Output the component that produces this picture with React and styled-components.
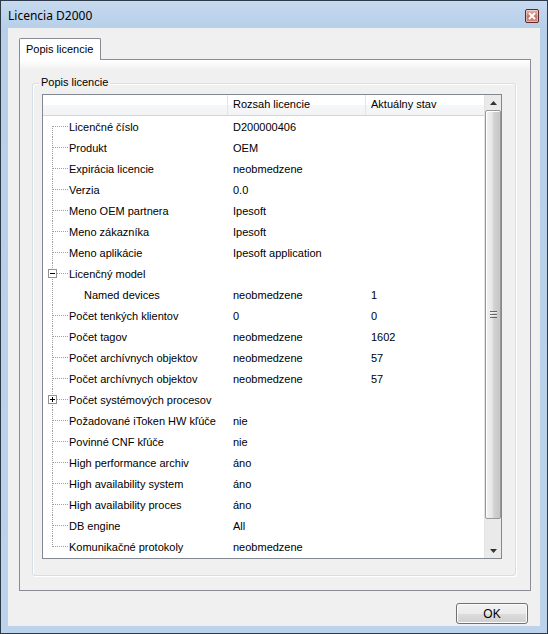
import React from "react";
import styled, { createGlobalStyle } from "styled-components";

const GlobalStyle = createGlobalStyle`
  body {
    margin: 0;
    font-family: Tahoma, "Liberation Sans", Arial, sans-serif;
    font-size: 11px;
    color: #000;
  }
  * { box-sizing: border-box; }
`;

const rows = [
  { name: "Licenčné číslo", range: "D200000406", state: "" },
  { name: "Produkt", range: "OEM", state: "" },
  { name: "Expirácia licencie", range: "neobmedzene", state: "" },
  { name: "Verzia", range: "0.0", state: "" },
  { name: "Meno OEM partnera", range: "Ipesoft", state: "" },
  { name: "Meno zákazníka", range: "Ipesoft", state: "" },
  { name: "Meno aplikácie", range: "Ipesoft application", state: "" },
  { name: "Licenčný model", range: "", state: "", toggle: "minus" },
  { name: "Named devices", range: "neobmedzene", state: "1", child: true },
  { name: "Počet tenkých klientov", range: "0", state: "0" },
  { name: "Počet tagov", range: "neobmedzene", state: "1602" },
  { name: "Počet archívnych objektov", range: "neobmedzene", state: "57" },
  { name: "Počet archívnych objektov", range: "neobmedzene", state: "57" },
  { name: "Počet systémových procesov", range: "", state: "", toggle: "plus" },
  { name: "Požadované iToken HW kľúče", range: "nie", state: "" },
  { name: "Povinné CNF kľúče", range: "nie", state: "" },
  { name: "High performance archiv", range: "áno", state: "" },
  { name: "High availability system", range: "áno", state: "" },
  { name: "High availability proces", range: "áno", state: "" },
  { name: "DB engine", range: "All", state: "" },
  { name: "Komunikačné protokoly", range: "neobmedzene", state: "" },
];

const App = () => {
  return (
    <>
      <GlobalStyle />
      <Window>
        <TitleBar>
          <Title>Licencia D2000</Title>
          <CloseButton>
            <svg width="8" height="8" viewBox="0 0 8 8">
              <path d="M1 1 L7 7 M7 1 L1 7" stroke="#fff" strokeWidth="2" />
            </svg>
          </CloseButton>
        </TitleBar>
        <Client>
          <TabStrip>
            <Tab>Popis licencie</Tab>
          </TabStrip>
          <TabPanel>
            <GroupBox>
              <Legend>Popis licencie</Legend>
              <ListView>
                <ListBody>
                  <HeaderRow>
                    <HeaderCell />
                    <HeaderCell>Rozsah licencie</HeaderCell>
                    <HeaderCell>Aktuálny stav</HeaderCell>
                  </HeaderRow>
                  {rows.map((r, i) => (
                    <Row key={i}>
                      <TreeCell>
                        <VLine
                          $first={i === 0}
                          $last={i === rows.length - 1}
                        />
                        {!r.child && <HLine $box={!!r.toggle} />}
                        {r.toggle && (
                          <Toggle>
                            <svg width="9" height="9" viewBox="0 0 9 9">
                              <path d="M2 4.5 H7" stroke="#000" strokeWidth="1" />
                              {r.toggle === "plus" && (
                                <path d="M4.5 2 V7" stroke="#000" strokeWidth="1" />
                              )}
                            </svg>
                          </Toggle>
                        )}
                        <Label $child={r.child}>{r.name}</Label>
                      </TreeCell>
                      <Cell>{r.range}</Cell>
                      <Cell>{r.state}</Cell>
                    </Row>
                  ))}
                </ListBody>
                <ScrollBar>
                  <ScrollButton>
                    <svg width="7" height="4" viewBox="0 0 7 4">
                      <path d="M0 4 L3.5 0 L7 4 Z" fill="#333" />
                    </svg>
                  </ScrollButton>
                  <Track>
                    <Thumb>
                      <Grip />
                    </Thumb>
                  </Track>
                  <ScrollButton>
                    <svg width="7" height="4" viewBox="0 0 7 4">
                      <path d="M0 0 L3.5 4 L7 0 Z" fill="#333" />
                    </svg>
                  </ScrollButton>
                </ScrollBar>
              </ListView>
            </GroupBox>
          </TabPanel>
          <ButtonRow>
            <Button>OK</Button>
          </ButtonRow>
        </Client>
      </Window>
    </>
  );
};

export default App;

const Window = styled.div`
  width: 548px;
  height: 634px;
  border: 1px solid #2c3a4a;
  background: linear-gradient(#c6d9ef 0, #b7cfe9 28px, #bcd3eb 100%);
  display: flex;
  flex-direction: column;
  padding: 0 7px 7px 7px;
`;

const TitleBar = styled.div`
  height: 28px;
  display: flex;
  align-items: center;
  justify-content: space-between;
  padding: 2px 1px 0 0;
`;

const Title = styled.div`
  font-family: "Noto Sans", "Open Sans", sans-serif;
  font-size: 12px;
  color: #000;
`;

const CloseButton = styled.div`
  width: 14px;
  height: 14px;
  border: 1px solid #5d2a2a;
  border-radius: 2px;
  background: linear-gradient(#e8b3a8, #c8726a 55%, #d08c80);
  display: flex;
  align-items: center;
  justify-content: center;
  box-shadow: inset 0 0 0 1px rgba(255, 255, 255, 0.4);
`;

const Client = styled.div`
  flex: 1;
  background: #f0f0f0;
  display: flex;
  flex-direction: column;
  padding: 8px 9px 2px 11px;
`;

const TabStrip = styled.div`
  height: 23px;
  display: flex;
  align-items: flex-end;
`;

const Tab = styled.div`
  height: 22px;
  padding: 4px 7px 0 6px;
  white-space: nowrap;
  border: 1px solid #898c95;
  border-bottom: none;
  border-radius: 2px 2px 0 0;
  background: #fff;
  margin-bottom: -1px;
  position: relative;
  z-index: 1;
`;

const TabPanel = styled.div`
  height: 532px;
  border: 1px solid #898c95;
  background: linear-gradient(#fff 0, #f0f0f0 10px);
  padding: 23px 14px 14px 12px;
  display: flex;
`;

const GroupBox = styled.div`
  flex: 1;
  position: relative;
  border: 1px solid #d5dfe5;
  border-radius: 3px;
  padding: 10px 13px 16px 9px;
  display: flex;
  box-shadow: inset 1px 1px 0 #fff, 1px 1px 0 #fff;
`;

const Legend = styled.div`
  position: absolute;
  top: -8px;
  left: 6px;
  padding: 0 2px;
  background: #f0f0f0;
`;

const ListView = styled.div`
  flex: 1;
  border: 1px solid #828790;
  background: #fff;
  display: flex;
`;

const ListBody = styled.div`
  flex: 1;
  display: flex;
  flex-direction: column;
`;

const columns = "185px 138px 1fr";

const HeaderRow = styled.div`
  display: grid;
  grid-template-columns: ${columns};
  height: 21px;
  background: linear-gradient(#fff 0, #fff 50%, #f6f7f9 51%, #f2f3f5 100%);
  border-bottom: 1px solid #d5d5d5;
`;

const HeaderCell = styled.div`
  display: flex;
  align-items: center;
  padding: 0 0 2px 5px;
  border-right: 1px solid #e3e4e6;
  &:last-child {
    border-right: none;
    padding-left: 5px;
  }
`;

const Row = styled.div`
  display: grid;
  grid-template-columns: ${columns};
  height: 21px;
  align-items: center;
`;

const TreeCell = styled.div`
  position: relative;
  height: 100%;
  display: flex;
  align-items: center;
`;

const VLine = styled.div`
  position: absolute;
  left: 9px;
  top: ${(p) => (p.$first ? "10px" : "0")};
  height: ${(p) => (p.$first ? "11px" : p.$last ? "11px" : "21px")};
  border-left: 1px dotted #a0a0a0;
`;

const HLine = styled.div`
  position: absolute;
  left: ${(p) => (p.$box ? "14px" : "10px")};
  top: 10px;
  width: ${(p) => (p.$box ? "11px" : "15px")};
  border-top: 1px dotted #a0a0a0;
`;

const Toggle = styled.div`
  position: absolute;
  left: 5px;
  top: 6px;
  width: 9px;
  height: 9px;
  border: 1px solid #919191;
  background: #fff;
  display: flex;
  align-items: center;
  justify-content: center;
  & svg {
    margin: -1px;
  }
`;

const Label = styled.div`
  padding-left: ${(p) => (p.$child ? "41px" : "26px")};
  white-space: nowrap;
`;

const Cell = styled.div`
  padding-left: 5px;
  white-space: nowrap;
`;

const ScrollBar = styled.div`
  width: 17px;
  display: flex;
  flex-direction: column;
  background: #eaeaea;
  border-left: 1px solid #e3e3e3;
`;

const ScrollButton = styled.div`
  height: 15px;
  display: flex;
  align-items: center;
  justify-content: center;
`;

const Track = styled.div`
  flex: 1;
  display: flex;
  flex-direction: column;
  padding-bottom: 24px;
`;

const Thumb = styled.div`
  flex: 1;
  border: 1px solid #979797;
  border-radius: 2px;
  background: linear-gradient(90deg, #f2f2f2 0, #e6e6e6 45%, #d2d2d2 55%, #c6c6c6 100%);
  box-shadow: inset 1px 1px 0 #fff;
  display: flex;
  align-items: center;
  justify-content: center;
`;

const Grip = styled.div`
  width: 7px;
  height: 7px;
  background: repeating-linear-gradient(#4a4a4a 0, #4a4a4a 1px, #f4f4f4 1px, #f4f4f4 2px, transparent 2px, transparent 3px);
  opacity: 0.8;
`;

const ButtonRow = styled.div`
  display: flex;
  justify-content: flex-end;
  padding: 12px 3px 0 0;
`;

const Button = styled.div`
  width: 72px;
  height: 21px;
  border: 1px solid #707070;
  border-radius: 3px;
  background: linear-gradient(#f2f2f2 0, #ebebeb 50%, #dddddd 51%, #cfcfcf 100%);
  box-shadow: inset 0 0 0 1px #fcfcfc;
  display: flex;
  align-items: center;
  justify-content: center;
  font-size: 12px;
`;
